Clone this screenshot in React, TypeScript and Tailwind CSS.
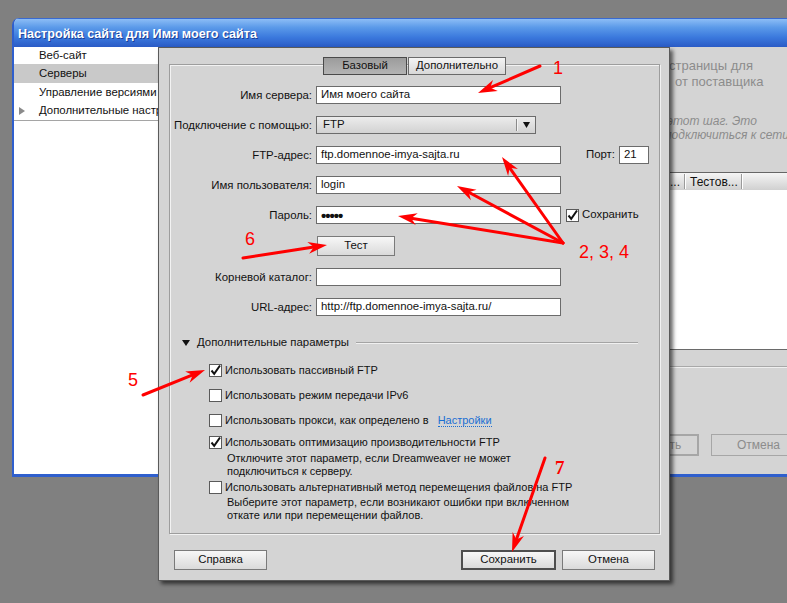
import React from "react";

type Pt = [number, number];

// red annotation arrows: [tail, tip]
const arrows: [Pt, Pt][] = [
  [[540, 66], [478, 93]],
  [[563, 243], [502, 157]],
  [[563, 243], [457, 186]],
  [[563, 243], [398, 216]],
  [[243, 258], [327, 245]],
  [[143, 395], [205, 370]],
  [[545, 458], [512, 552]],
];

const Arrow = ({ from, to }: { from: Pt; to: Pt }) => {
  const [x1, y1] = from;
  const [x2, y2] = to;
  const len = Math.hypot(x2 - x1, y2 - y1);
  const ux = (x2 - x1) / len;
  const uy = (y2 - y1) / len;
  const nx = -uy;
  const ny = ux;
  const L = 19;
  const W = 6;
  const bx = x2 - ux * L;
  const by = y2 - uy * L;
  const mx = x2 - ux * L * 0.7;
  const my = y2 - uy * L * 0.7;
  return (
    <g>
      <line x1={x1} y1={y1} x2={mx} y2={my} stroke="#ff0000" strokeWidth={3} strokeLinecap="round" />
      <polygon
        points={`${x2},${y2} ${bx + nx * W},${by + ny * W} ${mx},${my} ${bx - nx * W},${by - ny * W}`}
        fill="#ff0000"
      />
    </g>
  );
};

const Field = ({ w, children }: { w: string; children?: React.ReactNode }) => (
  <div className={`${w} h-[18px] bg-white border border-[#6b6b6b] pl-[4px] flex items-center leading-none`}>
    {children}
  </div>
);

const Check = ({ on }: { on?: boolean }) => (
  <div className="w-[13px] h-[13px] shrink-0 bg-white border border-[#5a5a5a] flex items-center justify-center">
    {on && (
      <svg width="11" height="11" viewBox="0 0 11 11" className="overflow-visible">
        <path d="M1.5 5.5 L4.2 8.8 L10 0.5" fill="none" stroke="#111" strokeWidth="2" />
      </svg>
    )}
  </div>
);

const Btn = ({ w, children, def }: { w: string; children: React.ReactNode; def?: boolean }) => (
  <div
    className={`${w} h-[20px] flex items-center justify-center bg-[linear-gradient(to_bottom,#f7f7f7,#dadada)] ${
      def ? "border-2 border-[#4e4e4e]" : "border border-[#7a7a7a]"
    }`}
  >
    {children}
  </div>
);

const Label = ({ children }: { children: React.ReactNode }) => (
  <div className="text-right leading-[18px] whitespace-nowrap">{children}</div>
);

const App: React.FC = () => {
  return (
    <div className="relative w-[787px] h-[603px] overflow-hidden bg-[#808080] font-['Liberation_Sans',Arial,sans-serif] text-[11.4px] text-[#111]">
      {/* background window */}
      <div className="absolute left-[12px] top-[18px] w-[790px] h-[459px] flex flex-col rounded-tl-[7px] overflow-hidden border-l-2 border-b-[3px] border-[#2f5fcd] bg-[#d4d4d4]">
        <div className="h-[29px] shrink-0 flex items-center pl-[4px] pt-[3px] border-t border-[#3a6ad0] bg-[linear-gradient(to_bottom,#8cbdf6_0%,#5b9ae9_30%,#3b79dd_65%,#2a5bc6_100%)]">
          <span className="text-white font-bold text-[12.6px] [text-shadow:1px_1px_0_#1c3f96] whitespace-nowrap">
            Настройка сайта для Имя моего сайта
          </span>
        </div>
        <div className="flex flex-1">
          <div className="w-[144px] shrink-0 bg-white flex flex-col whitespace-nowrap overflow-hidden">
            <div className="h-[17px] leading-[17px] pl-[25px]">Веб-сайт</div>
            <div className="h-[19px] leading-[19px] pl-[25px] bg-[#c9c9c9]">Серверы</div>
            <div className="h-[19px] leading-[19px] pl-[25px]">Управление версиями</div>
            <div className="h-[19px] flex items-center border-b border-[#a5a5a5]">
              <svg width="25" height="10" viewBox="0 0 25 10" className="shrink-0">
                <polygon points="5,1 11,5 5,9" fill="#8a8a8a" />
              </svg>
              Дополнительные настройки
            </div>
          </div>
          <div className="flex-1 flex flex-col text-[#8c8c8c]">
            <div className="mt-[11px] text-[13px] leading-[16px] whitespace-nowrap">
              <div className="pl-[511px]">страницы для</div>
              <div className="pl-[517px]">от поставщика</div>
            </div>
            <div className="mt-[24px] text-[12px] leading-[14px] italic whitespace-nowrap">
              <div className="pl-[509px]">этот шаг. Это</div>
              <div className="pl-[507px]">подключиться к сети и</div>
            </div>
            <div className="mt-[30px] h-[18px] border-t border-[#666] bg-[linear-gradient(to_bottom,#f5f5f5,#d0d0d0)] flex items-center text-[#111] text-[12px] whitespace-nowrap">
              <span className="pl-[512px]">...</span>
              <span className="ml-[4px] h-[15px] border-l border-r border-l-[#9a9a9a] border-r-white" />
              <span className="ml-[4px]">Тестов...</span>
              <span className="ml-[3px] h-[15px] border-l border-r border-l-[#9a9a9a] border-r-white" />
            </div>
            <div className="h-[160px] bg-white border-b border-[#6a6a6a]" />
            <div className="mt-[16px] h-[2px] border-t border-b border-t-[#a8a8a8] border-b-[#efefef]" />
            <div className="mt-[66px] flex pl-[446px] gap-[12px] text-[12px]">
              <div className="w-[95px] h-[22px] shrink-0 border-2 border-[#a6a6a6] flex items-center justify-center">Сохранить</div>
              <div className="w-[95px] h-[22px] shrink-0 border border-[#a6a6a6] flex items-center justify-center">Отмена</div>
            </div>
          </div>
        </div>
      </div>

      {/* dialog */}
      <div className="absolute left-[158px] top-[47px] w-[512px] h-[534px] flex flex-col border border-[#5a5a5a] bg-[#d4d4d4] shadow-[3px_3px_4px_rgba(0,0,0,0.6)]">
        <div className="mt-[16px] ml-[10px] w-[491px] h-[470px] border border-[#9d9d9d] shadow-[inset_1px_1px_0_#f2f2f2,1px_1px_0_#f2f2f2] flex flex-col">
          <div className="-mt-[8px] flex justify-center gap-[1px]">
            <div className="w-[84px] h-[18px] flex items-center justify-center border border-[#4a4a4a] bg-[linear-gradient(to_bottom,#9c9c9c,#b4b4b4)]">
              Базовый
            </div>
            <div className="w-[98px] h-[18px] flex items-center justify-center border border-[#6a6a6a] bg-[linear-gradient(to_bottom,#f4f4f4,#d8d8d8)]">
              Дополнительно
            </div>
          </div>

          <div className="mt-[11px] grid grid-cols-[142px_auto] gap-x-[4px] gap-y-[12px] items-center">
            <Label>Имя сервера:</Label>
            <Field w="w-[245px]">Имя моего сайта</Field>

            <Label>Подключение с помощью:</Label>
            <div className="w-[220px] h-[18px] flex items-center border border-[#6b6b6b] bg-[linear-gradient(to_bottom,#ececec,#d2d2d2)]">
              <span className="flex-1 pl-[6px]">FTP</span>
              <span className="h-[12px] border-l border-r border-l-[#8a8a8a] border-r-[#f4f4f4]" />
              <svg width="17" height="8" viewBox="0 0 17 8">
                <polygon points="5,1 12,1 8.5,7" fill="#111" />
              </svg>
            </div>

            <Label>FTP-адрес:</Label>
            <div className="flex items-center">
              <Field w="w-[245px]">ftp.domennoe-imya-sajta.ru</Field>
              <span className="ml-[25px] w-[27px] whitespace-nowrap">Порт:</span>
              <div className="ml-[6px]">
                <Field w="w-[30px]">21</Field>
              </div>
            </div>

            <Label>Имя пользователя:</Label>
            <Field w="w-[245px]">login</Field>

            <Label>Пароль:</Label>
            <div className="flex items-center">
              <Field w="w-[245px]">
                <span className="font-bold tracking-[-1px] text-[15px]">•••••</span>
              </Field>
              <div className="ml-[5px]">
                <Check on />
              </div>
              <span className="ml-[3px]">Сохранить</span>
            </div>

            <div />
            <div className="ml-[1px]">
              <Btn w="w-[78px]">Тест</Btn>
            </div>

            <Label>Корневой каталог:</Label>
            <Field w="w-[245px]" />

            <Label>URL-адрес:</Label>
            <Field w="w-[245px]">http://ftp.domennoe-imya-sajta.ru/</Field>
          </div>

          <div className="mt-[20px] h-[14px] flex items-center pl-[11px] pr-[21px]">
            <svg width="10" height="8" viewBox="0 0 10 8">
              <polygon points="1,1 9,1 5,7" fill="#111" />
            </svg>
            <span className="ml-[6px] whitespace-nowrap">Дополнительные параметры</span>
            <div className="ml-[7px] flex-1 h-[2px] border-t border-b border-t-[#a4a4a4] border-b-[#f0f0f0]" />
          </div>

          <div className="flex flex-col pl-[39px] text-[11px]">
            <div className="mt-[13px] h-[14px] flex items-center gap-[3px]">
              <Check on />
              <span>Использовать пассивный FTP</span>
            </div>
            <div className="mt-[11px] h-[14px] flex items-center gap-[3px]">
              <Check />
              <span>Использовать режим передачи IPv6</span>
            </div>
            <div className="mt-[11px] h-[14px] flex items-center gap-[3px]">
              <Check />
              <span>Использовать прокси, как определено в</span>
              <span className="ml-[6px] text-[#1b6fd3] border-b border-dotted border-[#1b6fd3] leading-[12px]">Настройки</span>
            </div>
            <div className="mt-[8px] h-[14px] flex items-center gap-[3px]">
              <Check on />
              <span>Использовать оптимизацию производительности FTP</span>
            </div>
            <div className="mt-[3px] pl-[18px] leading-[13px]">
              <div>Отключите этот параметр, если Dreamweaver не может</div>
              <div>подключиться к серверу.</div>
            </div>
            <div className="mt-[2px] h-[14px] flex items-center gap-[3px]">
              <Check />
              <span>Использовать альтернативный метод перемещения файлов на FTP</span>
            </div>
            <div className="mt-[2px] pl-[18px] leading-[13px]">
              <div>Выберите этот параметр, если возникают ошибки при включенном</div>
              <div>откате или при перемещении файлов.</div>
            </div>
          </div>
        </div>

        <div className="mt-[16px] flex pl-[15px] pr-[14px]">
          <Btn w="w-[93px]">Справка</Btn>
          <div className="ml-auto flex gap-[6px]">
            <Btn w="w-[95px]" def>
              Сохранить
            </Btn>
            <Btn w="w-[93px]">Отмена</Btn>
          </div>
        </div>
      </div>

      {/* annotations */}
      <svg className="absolute inset-0 pointer-events-none" width="787" height="603">
        {arrows.map(([f, t], i) => (
          <Arrow key={i} from={f} to={t} />
        ))}
      </svg>
      <span className="absolute left-[553px] top-[59px] text-[18px] leading-[18px] text-[#ff0000]">1</span>
      <span className="absolute left-[579px] top-[243px] text-[18px] leading-[18px] text-[#ff0000] whitespace-nowrap">2, 3, 4</span>
      <span className="absolute left-[245px] top-[230px] text-[18px] leading-[18px] text-[#ff0000]">6</span>
      <span className="absolute left-[128px] top-[371px] text-[18px] leading-[18px] text-[#ff0000]">5</span>
      <span className="absolute left-[555px] top-[459px] text-[19px] leading-[18px] font-bold text-[#ff0000] font-['Liberation_Serif',serif]">7</span>
    </div>
  );
};

export default App;
